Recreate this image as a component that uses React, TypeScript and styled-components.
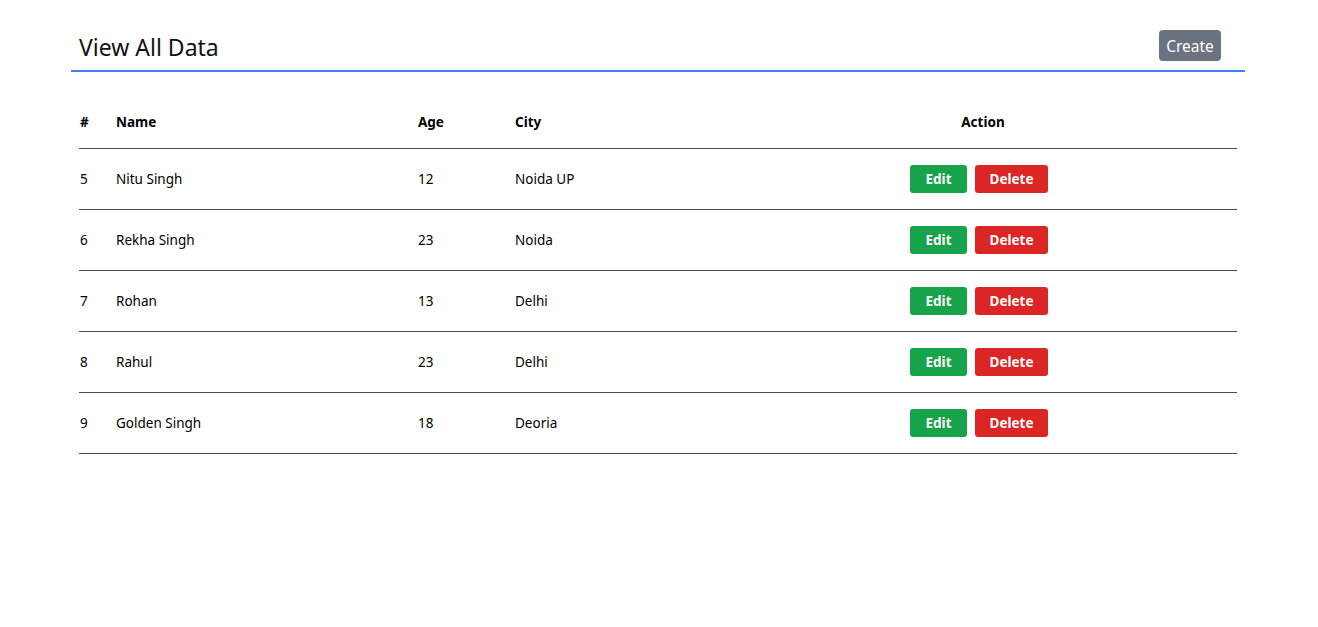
import React from "react";
import styled, { createGlobalStyle } from "styled-components";

const Global = createGlobalStyle`
  html, body { margin: 0; padding: 0; background: #fff; }
  body { font-family: "Noto Sans", "Open Sans", sans-serif; color: #000; }
  * { box-sizing: border-box; }
`;

const Page = styled.div`
  padding: 30px 73px 0 71px;
`;

const Header = styled.div`
  display: flex;
  align-items: flex-start;
  justify-content: space-between;
  border-bottom: 2px solid #3b82f6;
  padding: 0 24px 0 8px;
  height: 42px;
`;

const Title = styled.h1`
  margin: 0;
  font-size: 23px;
  font-weight: 400;
  line-height: 34px;
  color: #111;
`;

const CreateButton = styled.button`
  background: #6b7280;
  color: #fff;
  border: none;
  border-radius: 4px;
  height: 31px;
  width: 62px;
  padding: 1px 0 0 0;
  font-family: inherit;
  font-size: 15.5px;
  line-height: 30px;
`;

const Table = styled.div`
  margin: 24px 8px 0 8px;
  width: 1158px;
`;

const Row = styled.div<{ $head?: boolean }>`
  display: grid;
  grid-template-columns: 37px 302px 97px 214px 1fr;
  align-items: center;
  height: ${(p) => (p.$head ? "53px" : "61px")};
  border-bottom: 1px solid #4b4b4b;
  font-size: 13.5px;
  font-weight: ${(p) => (p.$head ? 700 : 400)};
`;

const Cell = styled.div<{ $center?: boolean; $first?: boolean }>`
  text-align: ${(p) => (p.$center ? "center" : "left")};
  padding-left: ${(p) => (p.$first ? "1px" : "0")};
`;

const Btn = styled.button<{ $kind: "edit" | "delete" }>`
  background: ${(p) => (p.$kind === "edit" ? "#16a34a" : "#dc2626")};
  color: #fff;
  border: none;
  border-radius: 3px;
  height: 28px;
  width: ${(p) => (p.$kind === "edit" ? "57px" : "73px")};
  margin-right: 8px;
  font-family: inherit;
  font-size: 13.5px;
  font-weight: 700;
  padding: 0;
`;

const Actions = styled.div`
  display: flex;
  justify-content: center;
`;

const data = [
  { id: 5, name: "Nitu Singh", age: 12, city: "Noida UP" },
  { id: 6, name: "Rekha Singh", age: 23, city: "Noida" },
  { id: 7, name: "Rohan", age: 13, city: "Delhi" },
  { id: 8, name: "Rahul", age: 23, city: "Delhi" },
  { id: 9, name: "Golden Singh", age: 18, city: "Deoria" },
];

export default function App() {
  return (
    <>
      <Global />
      <Page>
        <Header>
          <Title>View All Data</Title>
          <CreateButton>Create</CreateButton>
        </Header>
        <Table>
          <Row $head>
            <Cell $first>#</Cell>
            <Cell>Name</Cell>
            <Cell>Age</Cell>
            <Cell>City</Cell>
            <Cell $center>Action</Cell>
          </Row>
          {data.map((d) => (
            <Row key={d.id}>
              <Cell $first>{d.id}</Cell>
              <Cell>{d.name}</Cell>
              <Cell>{d.age}</Cell>
              <Cell>{d.city}</Cell>
              <Actions>
                <Btn $kind="edit">Edit</Btn>
                <Btn $kind="delete">Delete</Btn>
              </Actions>
            </Row>
          ))}
        </Table>
      </Page>
    </>
  );
}
